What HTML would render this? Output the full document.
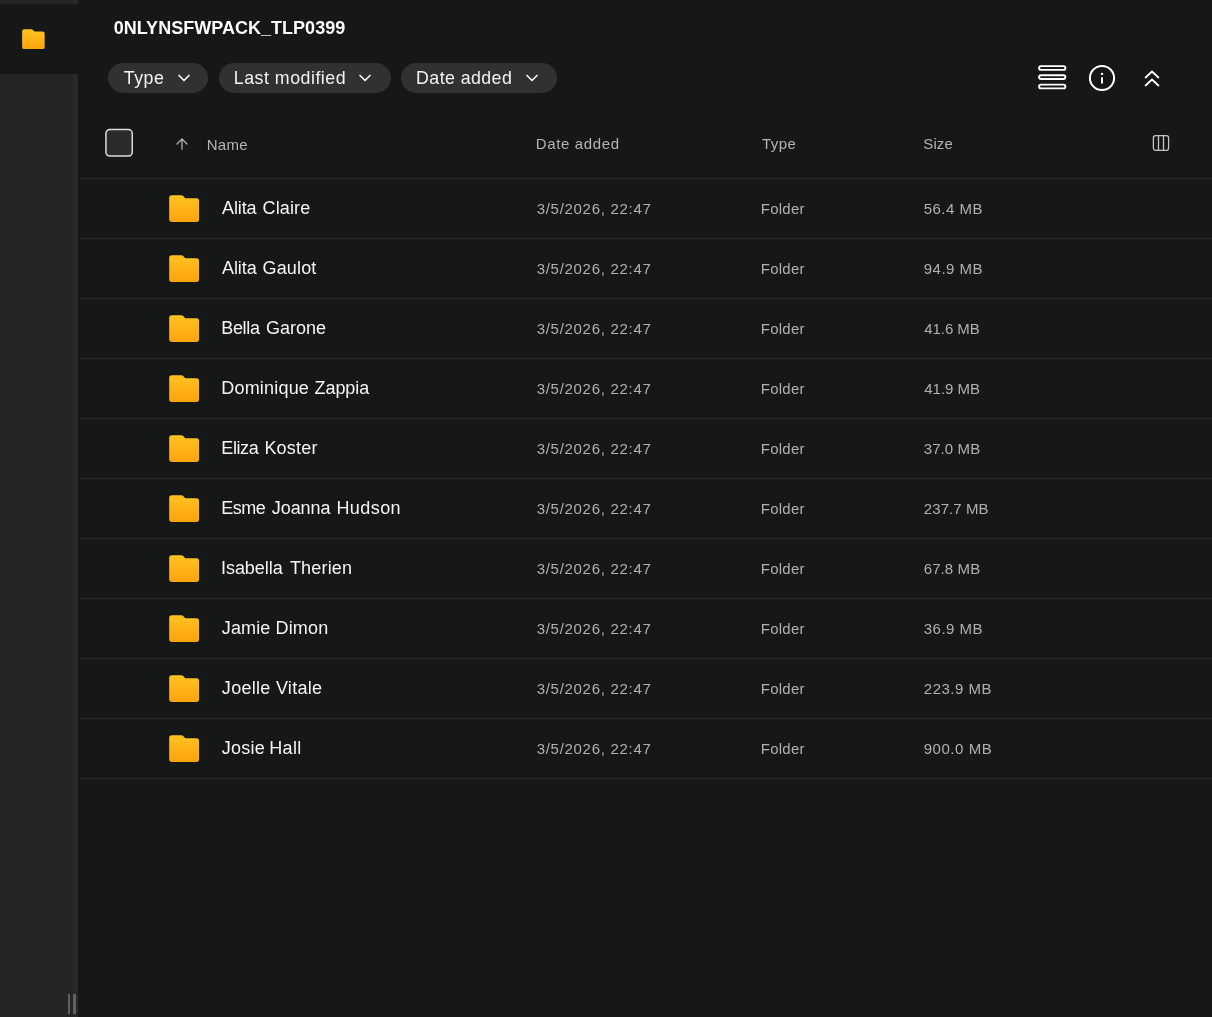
<!DOCTYPE html>
<html><head><meta charset="utf-8">
<style>
*{box-sizing:border-box;margin:0;padding:0}
html,body{width:1212px;height:1017px;overflow:hidden;background:#161818}
body{font-family:"Liberation Sans",sans-serif;color:#fff}
#main{position:absolute;left:0;top:0;width:1212px;height:1017px;will-change:transform}
.abs{position:absolute}
#side{left:0;top:0;width:78px;height:1017px;background:#222425}
#side .res{left:73px;top:0;width:5px;height:1017px;background:#26282a}
#side .act{left:0;top:4px;width:78px;height:70px;background:#161818}
#side .bar{width:2.600px;height:20.300px;top:993.700px;background:#5f6162}
.t{position:absolute;white-space:nowrap}
.title{font-size:18px;font-weight:bold;line-height:22px;color:#fbfbfb}
.chip{top:63px;height:30px;border-radius:15px;background:#303232}
.chip svg{position:absolute;top:10px}
.ct{font-size:17.8px;line-height:30px;color:#f2f2f2}
.hd{font-size:15px;color:#b4b4b4;line-height:18px}
.row{left:80px;width:1132px;height:60px;border-bottom:1px solid #282a2a}
.n{font-size:18px;line-height:22px;color:#f4f4f4}
.c{font-size:15px;line-height:18px;color:#b0b0b0;transform:translateY(0.5px)}
.row svg{position:absolute;left:89px;top:16px}
</style></head><body><div id="main">
<div id="side" class="abs">
  <div class="res abs"></div>
  <div class="act abs"></div>
  <svg class="abs" style="left:21.800px;top:28.800px" width="22.800" height="20.400" viewBox="0 0 30.300 27.200" preserveAspectRatio="none"><use href="#fold"/></svg>
  <div class="bar abs" style="left:67.900px"></div>
  <div class="bar abs" style="left:73px"></div>
</div>
<svg width="0" height="0" style="position:absolute">
<defs>
<linearGradient id="fg" x1="0" y1="0" x2="0" y2="1"><stop offset="0" stop-color="#ffc320"/><stop offset="1" stop-color="#ffa30e"/></linearGradient>
<path id="fold" fill="url(#fg)" d="M2.900 0.200H12.200c.8 0 1.600.300 2.100.9l1.200 1.300c.5.6 1.300.9 2.100.9H27.400a2.700 2.700 0 0 1 2.700 2.700V24.300a2.700 2.700 0 0 1-2.700 2.700H2.900a2.700 2.700 0 0 1-2.700-2.700V2.900A2.700 2.700 0 0 1 2.900 0.200z"/>
<path id="chev" d="M2 2.500l5 5 5-5" fill="none" stroke="#f2f2f2" stroke-width="1.700" stroke-linecap="round" stroke-linejoin="round"/>
</defs></svg>
<div class="t title" style="left:113.69px;top:17px;letter-spacing:0.026px">0NLYNSFWPACK_TLP0399</div>
<div class="chip abs" style="left:108px;width:100.4px"><div class="t ct" style="left:15.81px;top:0px;letter-spacing:0.528px">Type</div><svg style="left:69px" width="14" height="10" viewBox="0 0 14 10"><use href="#chev"/></svg></div>
<div class="chip abs" style="left:218.6px;width:172.2px"><div class="t ct" style="left:15.18px;top:0px;letter-spacing:0.507px">Last modified</div><svg style="left:139.4px" width="14" height="10" viewBox="0 0 14 10"><use href="#chev"/></svg></div>
<div class="chip abs" style="left:400.8px;width:156.2px"><div class="t ct" style="left:15.30px;top:0px;letter-spacing:0.420px">Date added</div><svg style="left:124.2px" width="14" height="10" viewBox="0 0 14 10"><use href="#chev"/></svg></div>

<!-- right icons -->
<svg class="abs" style="left:1036px;top:63px" width="32" height="28" viewBox="0 0 32 28" fill="none" stroke="#fff" stroke-width="1.900">
<rect x="3.100" y="3.100" width="26.300" height="3.800" rx="1.900"/><rect x="3.100" y="12.200" width="26.300" height="3.800" rx="1.900"/><rect x="3.100" y="21.600" width="26.300" height="3.800" rx="1.900"/></svg>
<svg class="abs" style="left:1088px;top:64px" width="28" height="28" viewBox="0 0 28 28" fill="none" stroke="#fff" stroke-width="2">
<circle cx="14" cy="14" r="12.100"/><path d="M14 14v4.700" stroke-linecap="round"/><circle cx="14" cy="9.900" r="1.200" fill="#fff" stroke="none"/></svg>
<svg class="abs" style="left:1142px;top:68px" width="20" height="22" viewBox="0 0 20 22" fill="none" stroke="#fff" stroke-width="1.800" stroke-linecap="round" stroke-linejoin="round">
<path d="M3.600 9.500l6.400-6 6.400 6M3.600 17.500l6.400-6 6.400 6"/></svg>
<svg class="abs" style="left:1151px;top:133px" width="20" height="20" viewBox="0 0 20 20" fill="none" stroke="#c4c4c4" stroke-width="1.300">
<rect x="2.400" y="2.700" width="15.200" height="14.600" rx="2.200"/><path d="M7.500 2.700v14.600M12.500 2.700v14.600"/></svg>

<!-- header -->
<svg class="abs" style="left:104px;top:128px" width="30" height="30" viewBox="0 0 30 30"><rect x="1.950" y="1.600" width="26.300" height="26.500" rx="3.800" fill="#2a2b2d" stroke="#dcdcdc" stroke-width="1.500"/></svg>
<svg class="abs" style="left:174px;top:135px" width="16" height="18" viewBox="0 0 16 18" fill="none" stroke="#b0b0b0" stroke-width="1.300" stroke-linecap="round" stroke-linejoin="round"><path d="M8 14.200V4.200M3 9L8 4l5 5"/></svg>
<div class="abs" style="left:80px;top:178px;width:1132px;height:1px;background:#292b2b"></div>
<div class="t hd" style="left:206.69px;top:136px;letter-spacing:0.273px">Name</div><div class="t hd" style="left:535.79px;top:135px;letter-spacing:0.628px">Date added</div><div class="t hd" style="left:762.02px;top:135px;letter-spacing:0.416px">Type</div><div class="t hd" style="left:923.34px;top:135px;letter-spacing:0.077px">Size</div>
<div class="row abs" style="top:179px"><svg width="31" height="28" viewBox="0 0 31 28"><use href="#fold"/></svg><div class="t n" style="left:142.02px;top:18px"><span style="letter-spacing:-0.100px">Alita</span> <span style="letter-spacing:0.116px;margin-left:0.99px">Claire</span></div><div class="t c" style="left:456.68px;top:20px;letter-spacing:0.708px">3/5/2026, 22:47</div><div class="t c" style="left:680.77px;top:20px;letter-spacing:0.253px">Folder</div><div class="t c" style="left:843.66px;top:20px;letter-spacing:0.494px">56.4 MB</div></div>
<div class="row abs" style="top:239px"><svg width="31" height="28" viewBox="0 0 31 28"><use href="#fold"/></svg><div class="t n" style="left:142.02px;top:18px"><span style="letter-spacing:-0.090px">Alita</span> <span style="letter-spacing:0.164px;margin-left:0.88px">Gaulot</span></div><div class="t c" style="left:456.68px;top:20px;letter-spacing:0.708px">3/5/2026, 22:47</div><div class="t c" style="left:680.77px;top:20px;letter-spacing:0.253px">Folder</div><div class="t c" style="left:843.72px;top:20px;letter-spacing:0.501px">94.9 MB</div></div>
<div class="row abs" style="top:299px"><svg width="31" height="28" viewBox="0 0 31 28"><use href="#fold"/></svg><div class="t n" style="left:141.25px;top:18px"><span style="letter-spacing:-0.321px">Bella</span> <span style="letter-spacing:-0.045px;margin-left:1.43px">Garone</span></div><div class="t c" style="left:456.68px;top:20px;letter-spacing:0.708px">3/5/2026, 22:47</div><div class="t c" style="left:680.77px;top:20px;letter-spacing:0.253px">Folder</div><div class="t c" style="left:844.18px;top:20px;letter-spacing:-0.043px">41.6 MB</div></div>
<div class="row abs" style="top:359px"><svg width="31" height="28" viewBox="0 0 31 28"><use href="#fold"/></svg><div class="t n" style="left:141.25px;top:18px"><span style="letter-spacing:0.195px">Dominique</span> <span style="letter-spacing:-0.064px;margin-left:0.47px">Zappia</span></div><div class="t c" style="left:456.68px;top:20px;letter-spacing:0.708px">3/5/2026, 22:47</div><div class="t c" style="left:680.77px;top:20px;letter-spacing:0.253px">Folder</div><div class="t c" style="left:844.18px;top:20px;letter-spacing:0.016px">41.9 MB</div></div>
<div class="row abs" style="top:419px"><svg width="31" height="28" viewBox="0 0 31 28"><use href="#fold"/></svg><div class="t n" style="left:141.25px;top:18px"><span style="letter-spacing:-0.377px">Eliza</span> <span style="letter-spacing:0.229px;margin-left:0.98px">Koster</span></div><div class="t c" style="left:456.68px;top:20px;letter-spacing:0.708px">3/5/2026, 22:47</div><div class="t c" style="left:680.77px;top:20px;letter-spacing:0.253px">Folder</div><div class="t c" style="left:843.68px;top:20px;letter-spacing:0.111px">37.0 MB</div></div>
<div class="row abs" style="top:479px"><svg width="31" height="28" viewBox="0 0 31 28"><use href="#fold"/></svg><div class="t n" style="left:141.25px;top:18px"><span style="letter-spacing:-0.534px">Esme</span> <span style="letter-spacing:-0.057px;margin-left:1.62px">Joanna</span> <span style="letter-spacing:0.428px;margin-left:0.95px">Hudson</span></div><div class="t c" style="left:456.68px;top:20px;letter-spacing:0.708px">3/5/2026, 22:47</div><div class="t c" style="left:680.77px;top:20px;letter-spacing:0.253px">Folder</div><div class="t c" style="left:843.80px;top:20px;letter-spacing:0.083px">237.7 MB</div></div>
<div class="row abs" style="top:539px"><svg width="31" height="28" viewBox="0 0 31 28"><use href="#fold"/></svg><div class="t n" style="left:141.04px;top:18px"><span style="letter-spacing:-0.058px">Isabella</span> <span style="letter-spacing:0.172px;margin-left:2.32px">Therien</span></div><div class="t c" style="left:456.68px;top:20px;letter-spacing:0.708px">3/5/2026, 22:47</div><div class="t c" style="left:680.77px;top:20px;letter-spacing:0.253px">Folder</div><div class="t c" style="left:843.70px;top:20px;letter-spacing:0.103px">67.8 MB</div></div>
<div class="row abs" style="top:599px"><svg width="31" height="28" viewBox="0 0 31 28"><use href="#fold"/></svg><div class="t n" style="left:141.87px;top:18px"><span style="letter-spacing:0.092px">Jamie</span> <span style="letter-spacing:0.227px;margin-left:0.05px">Dimon</span></div><div class="t c" style="left:456.68px;top:20px;letter-spacing:0.708px">3/5/2026, 22:47</div><div class="t c" style="left:680.77px;top:20px;letter-spacing:0.253px">Folder</div><div class="t c" style="left:843.68px;top:20px;letter-spacing:0.513px">36.9 MB</div></div>
<div class="row abs" style="top:659px"><svg width="31" height="28" viewBox="0 0 31 28"><use href="#fold"/></svg><div class="t n" style="left:141.87px;top:18px"><span style="letter-spacing:0.271px">Joelle</span> <span style="letter-spacing:0.299px;margin-left:0.35px">Vitale</span></div><div class="t c" style="left:456.68px;top:20px;letter-spacing:0.708px">3/5/2026, 22:47</div><div class="t c" style="left:680.77px;top:20px;letter-spacing:0.253px">Folder</div><div class="t c" style="left:843.80px;top:20px;letter-spacing:0.512px">223.9 MB</div></div>
<div class="row abs" style="top:719px"><svg width="31" height="28" viewBox="0 0 31 28"><use href="#fold"/></svg><div class="t n" style="left:141.87px;top:18px"><span style="letter-spacing:0.216px">Josie</span> <span style="letter-spacing:0.388px;margin-left:-0.80px">Hall</span></div><div class="t c" style="left:456.68px;top:20px;letter-spacing:0.708px">3/5/2026, 22:47</div><div class="t c" style="left:680.77px;top:20px;letter-spacing:0.253px">Folder</div><div class="t c" style="left:843.72px;top:20px;letter-spacing:0.538px">900.0 MB</div></div>
</div></body></html>
